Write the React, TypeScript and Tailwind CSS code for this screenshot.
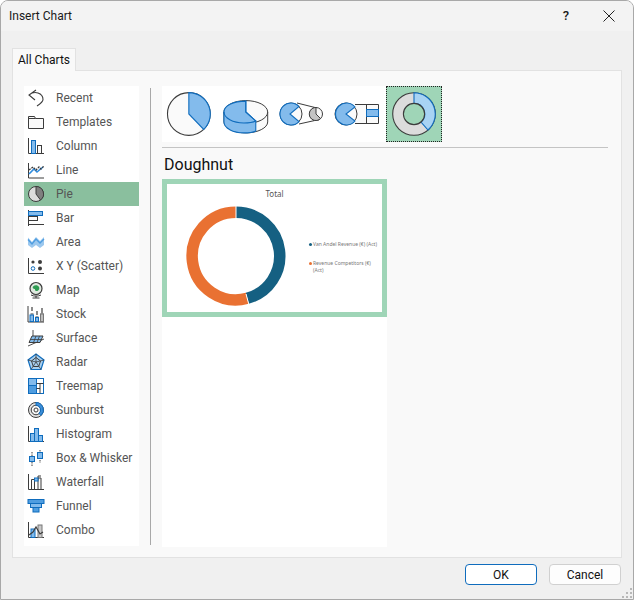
import { ReactNode } from "react";

const BLUE = "#0f6cbd";
const FILL = "#83bbec";
const DARK = "#3c3c3c";

function Ico({ children }: { children: ReactNode }) {
  return (
    <svg width="18" height="18" viewBox="0 0 18 18" fill="none" stroke={DARK} strokeWidth="1" className="shrink-0">
      {children}
    </svg>
  );
}

const rows: { label: string; icon: ReactNode }[] = [
  {
    label: "Recent",
    icon: (
      <Ico>
        <path d="M9 1 2 6l6 5M2 6c3-2.500 6-3 9-2 3 1 5 3.500 5 6.500 0 2.500-3 4.500-6 6.500" strokeWidth="1.100" />
      </Ico>
    ),
  },
  {
    label: "Templates",
    icon: (
      <Ico>
        <path d="M1.500 15.500V3.500h6l1 2h8v10z" fill="#fafafa" />
        <path d="M1.500 5.500h7" />
      </Ico>
    ),
  },
  {
    label: "Column",
    icon: (
      <Ico>
        <path d="M1.500 1v15.500H17" />
        <rect x="4.500" y="3.500" width="4" height="13" fill={FILL} stroke={BLUE} />
        <rect x="10.500" y="8.500" width="4" height="8" fill="#fafafa" />
      </Ico>
    ),
  },
  {
    label: "Line",
    icon: (
      <Ico>
        <path d="M1.500 2v15H17" />
        <path d="m2 13 5-5 3 3 6-5" stroke="#2f8de0" strokeWidth="1.600" />
        <path d="m2 9 4-3 3 3 3-3 2 2 3-3" strokeWidth="1.300" strokeDasharray="2 1" />
      </Ico>
    ),
  },
  {
    label: "Pie",
    icon: (
      <Ico>
        <circle cx="9" cy="9" r="7.500" fill="#dcdcdc" />
        <path d="M9 1.500A7.500 7.500 0 0 1 13.500 15L9 9z" fill="#7f7f7f" />
      </Ico>
    ),
  },
  {
    label: "Bar",
    icon: (
      <Ico>
        <path d="M1.500 1v16" />
        <rect x="1.500" y="2.500" width="14" height="4" fill={FILL} stroke={BLUE} />
        <rect x="1.500" y="7.500" width="9" height="4" fill="#fafafa" />
        <path d="M1.500 15.500H17" />
      </Ico>
    ),
  },
  {
    label: "Area",
    icon: (
      <Ico>
        <path d="M1 4.500 5 9l4-5 4 4 4-4v8l-4 3-4-3-4 3-4-3z" fill="#9cc8ee" stroke="none" />
        <path d="M1 6.500 5 11l4-5 4 4 4-4" stroke="#4f9de0" strokeWidth="1.400" />
      </Ico>
    ),
  },
  {
    label: "X Y (Scatter)",
    icon: (
      <Ico>
        <path d="M1.500 1v15.500H17" />
        <circle cx="6" cy="5" r="1.600" fill={DARK} stroke="none" />
        <circle cx="13" cy="5" r="2" fill={DARK} stroke="none" />
        <circle cx="6" cy="11.500" r="1.800" fill="#fff" stroke={BLUE} />
        <circle cx="13" cy="11.500" r="2" fill={DARK} stroke="none" />
      </Ico>
    ),
  },
  {
    label: "Map",
    icon: (
      <Ico>
        <circle cx="9" cy="7.500" r="6" fill="#dfe9df" strokeWidth="1.200" />
        <path d="M6 5.500c2-2 5-1.500 6 .5s-.5 4-2.500 4-1-2-2-2-2.500-1-1.500-2.500z" fill="#2e9c52" stroke="none" />
        <path d="M4 14c3 1.500 7 1.500 10 0M9 14.500V17M5.500 17h7" />
      </Ico>
    ),
  },
  {
    label: "Stock",
    icon: (
      <Ico>
        <path d="M1 1v16h16" />
        <path d="M5 2v4M10 6v4M15 3v5" strokeWidth="1.200" />
        <path d="M3.500 9h3M8.500 12h3M13.500 9h3" />
        <rect x="3" y="10" width="3.500" height="6.500" fill={FILL} stroke={BLUE} />
        <rect x="8.500" y="12.500" width="3" height="4" fill={FILL} stroke={BLUE} />
        <rect x="13.500" y="9" width="3" height="7.500" fill="#bdbdbd" stroke="#777" />
      </Ico>
    ),
  },
  {
    label: "Surface",
    icon: (
      <Ico>
        <path d="M6 1v10M1 17l16-7" strokeWidth="0.900" />
        <path d="M5 7h11l-3 6.500H2z" fill={FILL} stroke={DARK} />
        <path d="M9 7 6.500 13.500M12.500 7 10 13.500M3.500 10.500h11" stroke={DARK} strokeWidth="0.800" />
      </Ico>
    ),
  },
  {
    label: "Radar",
    icon: (
      <Ico>
        <path d="M9 1l8 6-3 9.500H4L1 7z" fill="#a9d0f0" stroke={BLUE} strokeWidth="1.200" />
        <path d="M9 4.500l4.500 3.500-1.800 5.500H6.300L4.500 8z" stroke={DARK} />
        <path d="M9 1v8m8-2L9 9m5 7.500L9 9m-5 7.500L9 9M1 7l8 2" stroke={DARK} strokeWidth="0.800" />
      </Ico>
    ),
  },
  {
    label: "Treemap",
    icon: (
      <Ico>
        <rect x="1.500" y="1.500" width="15" height="15" fill="#fff" stroke={BLUE} />
        <rect x="1.500" y="1.500" width="8" height="7" fill={FILL} stroke={BLUE} />
        <rect x="1.500" y="8.500" width="8" height="8" fill="#4f9de0" stroke={BLUE} />
        <path d="M9.500 6.500h7M13 6.500v10M9.500 11.500H13" stroke={DARK} />
      </Ico>
    ),
  },
  {
    label: "Sunburst",
    icon: (
      <Ico>
        <circle cx="9" cy="9" r="7.500" fill="#e4e4e4" />
        <circle cx="9" cy="9" r="4.800" fill="#f5f5f5" />
        <circle cx="9" cy="9" r="2" fill="#fff" />
        <path d="M9 1.500A7.500 7.500 0 0 1 14 14.500L12 12.500A4.800 4.800 0 0 0 9 4.200z" fill="#3e8fd8" stroke={BLUE} />
      </Ico>
    ),
  },
  {
    label: "Histogram",
    icon: (
      <Ico>
        <path d="M1.500 1v15.500H17" />
        <rect x="3.500" y="8.500" width="4" height="8" fill={FILL} stroke={BLUE} />
        <rect x="7.500" y="3.500" width="4" height="13" fill={FILL} stroke={BLUE} />
        <rect x="11.500" y="10.500" width="4" height="6" fill={FILL} stroke={BLUE} />
      </Ico>
    ),
  },
  {
    label: "Box & Whisker",
    icon: (
      <Ico>
        <path d="M5 3v14M13 1v13" strokeDasharray="1.500 1" />
        <rect x="2.500" y="7.500" width="5" height="5" fill={FILL} stroke={BLUE} />
        <rect x="10.500" y="3.500" width="5" height="6" fill={FILL} stroke={BLUE} />
      </Ico>
    ),
  },
  {
    label: "Waterfall",
    icon: (
      <Ico>
        <path d="M1.500 1v15.500H17" />
        <path d="M4.500 16V6.500h3V16M11 16V5h3v11" fill="#fafafa" />
        <path d="M7.500 6.500h3.500V3h3" fill="none" />
        <rect x="7.500" y="5" width="3.500" height="3" fill={FILL} stroke={BLUE} />
      </Ico>
    ),
  },
  {
    label: "Funnel",
    icon: (
      <Ico>
        <rect x="1" y="2.500" width="16" height="4" fill="#4f9de0" stroke={BLUE} />
        <rect x="3.500" y="6.500" width="11" height="4" fill={FILL} stroke={BLUE} />
        <rect x="6" y="10.500" width="6" height="4.500" fill="#4f9de0" stroke={BLUE} />
      </Ico>
    ),
  },
  {
    label: "Combo",
    icon: (
      <Ico>
        <path d="M1.500 1v15.500H17" />
        <rect x="4" y="8" width="4" height="8.500" fill={FILL} stroke={BLUE} />
        <rect x="11" y="4" width="4" height="12.500" fill="#c9c9c9" stroke="#777" />
        <path d="m2 14 4-3 3-5 4 7 3-2" strokeWidth="1.200" />
      </Ico>
    ),
  },
];

function PieThumb() {
  return (
    <svg width="56" height="56" viewBox="0 0 56 56" fill="none" stroke={DARK}>
      <circle cx="27" cy="28" r="21.500" fill="#fafafa" strokeWidth="1.100" />
      <path d="M27 6.500A21.500 21.500 0 0 1 42 43.500L27 28z" fill={FILL} stroke={BLUE} strokeWidth="1.100" />
    </svg>
  );
}

function Pie3dThumb() {
  return (
    <svg width="56" height="56" viewBox="0 0 56 56" fill="none" stroke={DARK}>
      <path d="M6 26v10c0 6 10 11 22 11s22-5 22-11V26" fill="#fafafa" />
      <ellipse cx="28" cy="26" rx="22" ry="11.500" fill="#fafafa" />
      <path d="M6 26v10c0 6 9 11 20 11 5 0 9-.5 12-2V35L28 26V15C15 15 6 20 6 26z" fill={FILL} stroke={BLUE} strokeWidth="1.100" />
      <path d="M6 26c0 6 9 11 20 11 5 0 9-.5 12-2L28 26V14.500" stroke={BLUE} strokeWidth="1.100" />
    </svg>
  );
}

function PieOfPieThumb() {
  return (
    <svg width="46" height="24" viewBox="0 0 46 24" fill="none" stroke={DARK}>
      <path d="M18 1 38 6M20 22 38 18" />
      <circle cx="12" cy="12" r="11" fill="#fafafa" />
      <path d="M20 4.500A11 11 0 1 0 20 19.500L11 12z" fill={FILL} stroke={BLUE} strokeWidth="1.100" />
      <circle cx="37" cy="12" r="6.500" fill="#fafafa" />
      <path d="M37 5.500A6.500 6.500 0 1 0 41.500 16.500L37 12z" fill="#c4c4c4" />
    </svg>
  );
}

function BarOfPieThumb() {
  return (
    <svg width="46" height="24" viewBox="0 0 46 24" fill="none" stroke={DARK}>
      <path d="M21 2.500h23.500v19H21M32.500 2.500v19" fill="#fafafa" />
      <circle cx="12" cy="12" r="11" fill="#fafafa" />
      <path d="M21 5A11 11 0 1 0 21 19L12 12z" fill={FILL} stroke={BLUE} strokeWidth="1.100" />
      <rect x="32.500" y="7.500" width="12" height="7" fill={FILL} stroke={BLUE} />
    </svg>
  );
}

function DoughnutThumb() {
  return (
    <svg width="44" height="44" viewBox="0 0 44 44" fill="none" stroke={DARK}>
      <circle cx="22" cy="22" r="21.300" fill="#dcdcdc" strokeWidth="1.100" />
      <path d="M22 .700A21.300 21.300 0 0 1 36 38L29 30A10.600 10.600 0 0 0 22 11.400z" fill="#a8d3f4" stroke={BLUE} strokeWidth="1.100" />
      <circle cx="22" cy="22" r="10.600" fill="#9fd5b7" strokeWidth="1.100" />
    </svg>
  );
}

function PreviewDonut() {
  return (
    <svg width="100" height="100" viewBox="0 0 100 100" fill="none" strokeWidth="11.500" className="shrink-0">
      <path d="M50 6.200A43.800 43.800 0 0 1 61.300 92.300" stroke="#156082" />
      <path d="M61.300 92.300A43.800 43.800 0 1 1 50 6.200" stroke="#e97132" />
      <path d="M50 0v12M60 88l3 11" stroke="#fff" strokeWidth="1" />
    </svg>
  );
}

export default function App() {
  return (
    <div className="w-[634px] h-[600px] flex flex-col bg-[#f0f0f0] border border-[#a8a8a8] rounded-t-[8px] overflow-hidden text-[12px] text-[#1a1a1a] font-['Roboto','Noto_Sans',sans-serif]">
      {/* Title bar */}
      <div className="h-[30px] shrink-0 flex items-center bg-[#f3f3f3] pl-[8px]">
        <span className="flex-1 text-[12px]">Insert Chart</span>
        <span className="w-[46px] text-center text-[13px] font-medium mr-[14px]">?</span>
        <svg width="12" height="12" viewBox="0 0 12 12" stroke="#222" strokeWidth="1" className="mr-[18px]">
          <path d="M.5.500l11 11M11.500.500l-11 11" />
        </svg>
      </div>

      {/* Tab */}
      <div className="mt-[17px] pl-[11px] h-[22px] shrink-0 flex relative z-10">
        <div className="w-[64px] h-[23px] flex items-center justify-center bg-[#f9f9f9] border border-b-0 border-[#e2e2e2] text-[#111]">
          All Charts
        </div>
      </div>

      {/* Main panel */}
      <div className="mx-[11px] h-[488px] shrink-0 flex bg-[#f9f9f9] border border-[#e2e2e2] pt-[15px] pl-[11px]">
        <div className="w-[115px] h-[460px] shrink-0 bg-white flex flex-col">
          {rows.map((r) => (
            <div
              key={r.label}
              className={`h-[24px] shrink-0 flex items-center pl-[3px] gap-[11px] whitespace-nowrap text-[#555] ${
                r.label === "Pie" ? "bg-[#8abf9e]" : ""
              }`}
            >
              {r.icon}
              <span>{r.label}</span>
            </div>
          ))}
        </div>

        <div className="w-px h-[457px] mt-[2px] ml-[11px] bg-[#a8a8a8] shrink-0" />

        <div className="ml-[11px] flex-1 flex flex-col">
          <div className="flex items-center">
            <div className="w-[280px] h-[56px] bg-white flex items-center">
              <PieThumb />
              <Pie3dThumb />
              <div className="ml-[6px]">
                <PieOfPieThumb />
              </div>
              <div className="ml-[9px]">
                <BarOfPieThumb />
              </div>
              <div className="ml-[6px] w-[56px] h-[56px] flex items-center justify-center bg-[#9fd5b7] border border-dotted border-[#222]">
                <DoughnutThumb />
              </div>
            </div>
          </div>
          <div className="mt-[5px] w-[446px] h-px bg-[#c4c4c4]" />
          <div className="mt-[5px] h-[24px] flex items-center text-[16px] pl-[2px] text-[#111]">Doughnut</div>

          <div className="w-[225px] h-[368px] mt-[2px] bg-white">
            <div className="h-[138px] border-[5px] border-[#9fd5b7] flex flex-col">
              <div className="mt-[3px] h-[14px] flex items-center justify-center text-[8px] text-[#555] font-['Noto_Sans',sans-serif]">Total</div>
              <div className="mt-[5px] pl-[19px] flex items-center">
                <PreviewDonut />
                <div className="ml-[23px] mt-[2px] flex flex-col gap-[12px] text-[5px] leading-[7px] text-[#777] font-['Noto_Sans',sans-serif]">
                  <div className="flex gap-[1px]">
                    <span className="mt-[2px] w-[3px] h-[3px] rounded-full bg-[#156082] shrink-0" />
                    <span className="whitespace-nowrap">Van Andel Revenue (€) (Act)</span>
                  </div>
                  <div className="flex gap-[1px] w-[66px]">
                    <span className="mt-[2px] w-[3px] h-[3px] rounded-full bg-[#e97132] shrink-0" />
                    <span>Revenue Competitors (€) (Act)</span>
                  </div>
                </div>
              </div>
            </div>
          </div>
        </div>
      </div>

      {/* Footer */}
      <div className="flex-1 flex justify-end items-start pt-[6px] pr-[12px] gap-[12px] relative">
        <button className="w-[72px] h-[21px] flex items-center justify-center bg-white border border-[#0f6cbd] rounded-[4px] text-[12px] text-[#111]">
          OK
        </button>
        <button className="w-[72px] h-[21px] flex items-center justify-center bg-[#fdfdfd] border border-[#d0d0d0] rounded-[4px] text-[12px] text-[#111]">
          Cancel
        </button>
        <svg width="11" height="11" viewBox="0 0 11 11" fill="#b8b8b8" className="absolute right-0 bottom-0">
          <rect x="8" y="0" width="2" height="2" />
          <rect x="4" y="4" width="2" height="2" />
          <rect x="8" y="4" width="2" height="2" />
          <rect x="0" y="8" width="2" height="2" />
          <rect x="4" y="8" width="2" height="2" />
          <rect x="8" y="8" width="2" height="2" />
        </svg>
      </div>
    </div>
  );
}
